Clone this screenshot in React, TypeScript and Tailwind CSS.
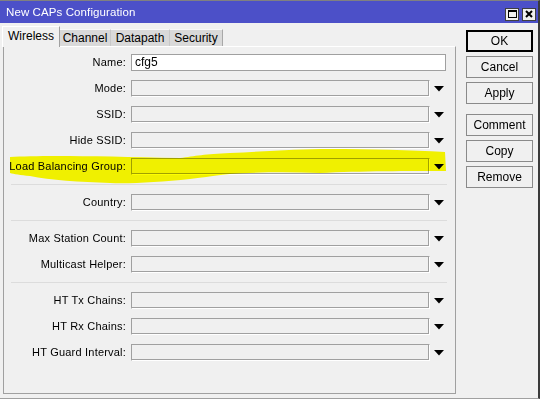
import React from "react";

const fields: { label: string; kind: "text" | "select"; value?: string; sepAfter?: boolean }[] = [
  { label: "Name:", kind: "text", value: "cfg5" },
  { label: "Mode:", kind: "select" },
  { label: "SSID:", kind: "select" },
  { label: "Hide SSID:", kind: "select" },
  { label: "Load Balancing Group:", kind: "select", sepAfter: true },
  { label: "Country:", kind: "select", sepAfter: true },
  { label: "Max Station Count:", kind: "select" },
  { label: "Multicast Helper:", kind: "select", sepAfter: true },
  { label: "HT Tx Chains:", kind: "select" },
  { label: "HT Rx Chains:", kind: "select" },
  { label: "HT Guard Interval:", kind: "select" },
];

function Arrow() {
  return (
    <svg width="10" height="6" viewBox="0 0 10 6" className="block">
      <polygon points="0,0 10,0 5,5.5" fill="#000" />
    </svg>
  );
}

function Field({ label, kind, value }: { label: string; kind: "text" | "select"; value?: string }) {
  return (
    <div className="flex items-center h-[17px]">
      <div className="w-[115px] flex justify-end text-[11px] tracking-[0.2px] leading-none text-black whitespace-nowrap">{label}</div>
      <div className="w-[5px]" />
      {kind === "text" ? (
        <div className="w-[315px] h-[17px] bg-white border border-[#a0a0a0] text-[12px] leading-[15px] pl-[3px] text-black">
          {value}
        </div>
      ) : (
        <>
          <div className="w-[299px] h-[17px] bg-[#f0f0f0] border border-[#a0a0a0] border-r-white border-b-white shadow-[inset_-1px_-1px_0_#a0a0a0]" />
          <div className="w-[17px] flex justify-center pl-[1px]">
            <Arrow />
          </div>
        </>
      )}
    </div>
  );
}

function Btn({ label, primary }: { label: string; primary?: boolean }) {
  return (
    <div
      className={
        "w-[67px] h-[22px] flex items-center justify-center text-[12px] text-black bg-[#f0f0f0] " +
        (primary ? "border-2 border-black" : "border border-[#8a8a8a]")
      }
    >
      {label}
    </div>
  );
}

export default function App() {
  return (
    <div className="w-[542px] h-[399px] bg-white overflow-hidden relative" style={{ fontFamily: '"Liberation Sans", Arial, sans-serif' }}>
      <div className="w-[540px] h-[399px] bg-[#f0f0f0] border-r-2 border-r-[#3a3a3a] border-b border-b-[#a0a0a0] border-t border-t-[#808080] flex flex-col">
        {/* title bar */}
        <div className="h-[22px] bg-[#4c50c8] flex items-center pl-[6px] pr-[2px] shrink-0">
          <span className="text-white text-[11.5px] leading-none tracking-[0.1px] flex-1 pt-[2px]">New CAPs Configuration</span>
          <div className="flex gap-[3px] mt-[4px]">
            <div className="w-[14px] h-[13px] bg-[#f0f0f0] border border-[#404040] flex items-center justify-center">
              <div className="w-[9px] h-[8px] border border-black border-t-2" />
            </div>
            <div className="w-[14px] h-[13px] bg-[#f0f0f0] border border-[#404040] flex items-center justify-center">
              <svg width="8" height="8" viewBox="0 0 8 8">
                <path d="M1 1 L7 7 M7 1 L1 7" stroke="#000" strokeWidth="2" />
              </svg>
            </div>
          </div>
        </div>

        <div className="flex flex-1">
          {/* left: tabs + panel */}
          <div className="pl-[3px] pt-[3px] w-[456px] flex flex-col">
            <div className="h-[20px] flex items-end relative z-10">
              <div className="h-[21px] w-[58px] -ml-px bg-[#f0f0f0] border-t border-l border-white border-r border-r-[#a0a0a0] flex items-center justify-center text-[12px] text-black -mb-px pb-[2px]">
                Wireless
              </div>
              <div className="h-[17px] w-[51px] bg-[#d9d9d9] border-t border-r border-[#c8c8c8] border-t-[#f8f8f8] flex items-center justify-center text-[12px] text-black">
                Channel
              </div>
              <div className="h-[17px] w-[59px] bg-[#d9d9d9] border-t border-r border-[#c8c8c8] border-t-[#f8f8f8] flex items-center justify-center text-[12px] text-black">
                Datapath
              </div>
              <div className="h-[17px] w-[53px] bg-[#d9d9d9] border-t border-r border-[#a8a8a8] border-t-[#f8f8f8] flex items-center justify-center text-[12px] text-black">
                Security
              </div>
            </div>
            <div className="h-[348px] border border-t-white border-l-[#a0a0a0] border-r-[#a0a0a0] border-b-[#a0a0a0] pl-[7px] pt-[7px] flex flex-col gap-[9px]">
              {fields.map((f) => (
                <React.Fragment key={f.label}>
                  <Field label={f.label} kind={f.kind} value={f.value} />
                  {f.sepAfter && <div className="h-px w-[436px] bg-[#dcdcdc]" />}
                </React.Fragment>
              ))}
            </div>
          </div>

          {/* right: buttons */}
          <div className="pl-[10px] pt-[7px] flex flex-col">
            <div className="flex flex-col gap-[4px]">
              <Btn label="OK" primary />
              <Btn label="Cancel" />
              <Btn label="Apply" />
            </div>
            <div className="flex flex-col gap-[4px] mt-[10px]">
              <Btn label="Comment" />
              <Btn label="Copy" />
              <Btn label="Remove" />
            </div>
          </div>
        </div>
      </div>

      {/* highlighter annotation */}
      <svg className="absolute left-0 top-0 pointer-events-none mix-blend-multiply" width="542" height="399" viewBox="0 0 542 399">
        <path
          d="M10 157 C40 155 100 156 180 158 C195 156 205 154 230 153 C270 151 300 149 330 149 C370 149 410 150 445 152 L446 171 C410 171 360 171 320 173 C290 172 260 172 230 174 C210 176 200 178 190 179 C160 182 130 184 110 183 C80 182 50 180 30 176 C20 175 14 174 10 173 Z"
          fill="#ffff00"
        />
      </svg>
    </div>
  );
}
